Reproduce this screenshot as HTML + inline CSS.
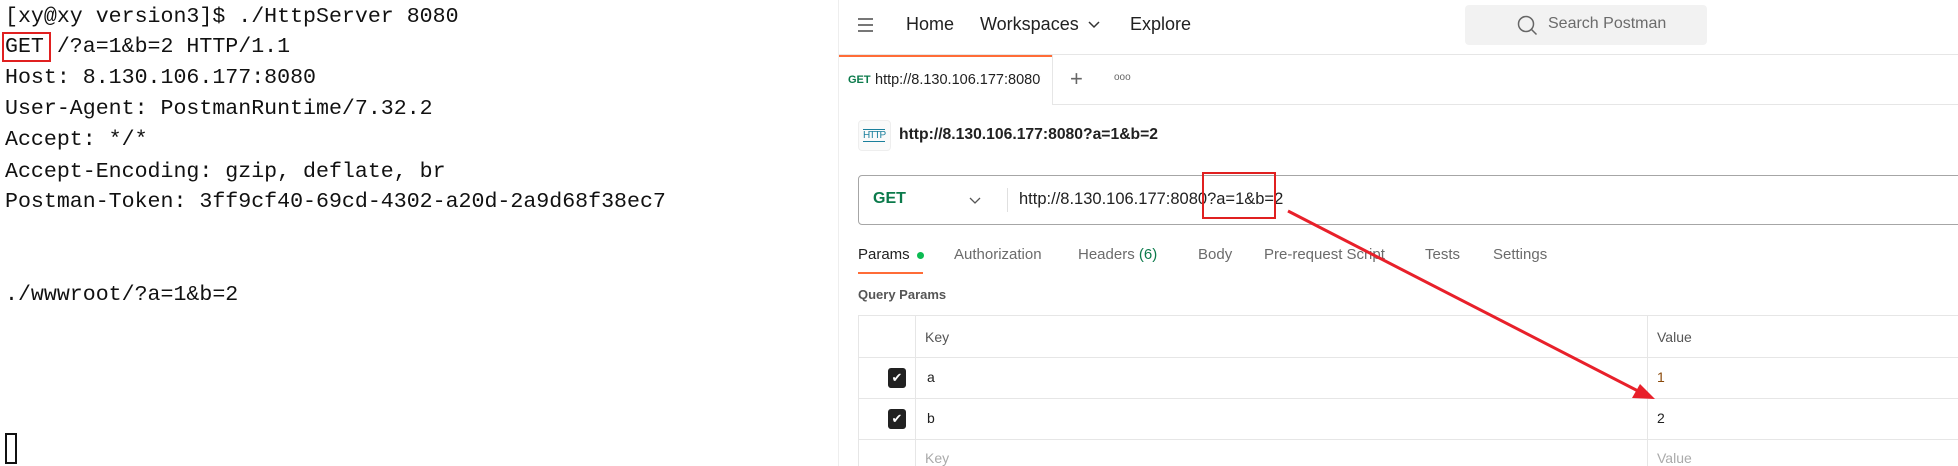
<!DOCTYPE html>
<html><head><meta charset="utf-8"><style>
*{margin:0;padding:0;box-sizing:border-box}
body{width:1958px;height:466px;overflow:hidden;background:#fff;position:relative;font-family:"Liberation Sans",sans-serif}
.a{position:absolute;white-space:nowrap}
.t{position:absolute;left:5px;font-family:"Liberation Mono",monospace;font-size:21.6px;color:#111;line-height:31px;white-space:pre}
.n{font-size:18px;color:#212121}
.tab{font-size:15px;color:#6b6b6b}
</style></head><body>
<div class="t" style="top:2px">[xy@xy version3]$ ./HttpServer 8080</div>
<div class="t" style="top:32px">GET /?a=1&amp;b=2 HTTP/1.1</div>
<div class="t" style="top:63px">Host: 8.130.106.177:8080</div>
<div class="t" style="top:94px">User-Agent: PostmanRuntime/7.32.2</div>
<div class="t" style="top:125px">Accept: */*</div>
<div class="t" style="top:157px">Accept-Encoding: gzip, deflate, br</div>
<div class="t" style="top:187px">Postman-Token: 3ff9cf40-69cd-4302-a20d-2a9d68f38ec7</div>
<div class="t" style="top:280px">./wwwroot/?a=1&amp;b=2</div>
<div class="a" style="left:2px;top:32px;width:49px;height:30px;border:2px solid #e02020"></div>
<div class="a" style="left:5px;top:433px;width:12px;height:31px;border:2px solid #111"></div>

<div class="a" style="left:838px;top:0;width:1px;height:466px;background:#eee"></div>
<div class="a" style="left:858px;top:18px;width:15px;height:2px;background:#777;box-shadow:0 6px 0 #777,0 12px 0 #777"></div>
<div class="a n" style="left:906px;top:14px">Home</div>
<div class="a n" style="left:980px;top:14px">Workspaces</div>
<svg class="a" style="left:1088px;top:20px" width="12" height="10"><path d="M1 2l5 5 5-5" stroke="#333" stroke-width="1.5" fill="none"/></svg>
<div class="a n" style="left:1130px;top:14px">Explore</div>
<div class="a" style="left:1465px;top:5px;width:242px;height:40px;background:#f2f2f2;border-radius:4px"></div>
<svg class="a" style="left:1517px;top:15px" width="22" height="22"><circle cx="9" cy="9" r="7.5" stroke="#666" stroke-width="1.5" fill="none"/><path d="M14.5 14.5l5 5" stroke="#666" stroke-width="1.5"/></svg>
<div class="a" style="left:1548px;top:15px;font-size:16px;color:#6b6b6b">Search Postman</div>
<div class="a" style="left:839px;top:54px;width:1119px;height:1px;background:#e6e6e6"></div>
<div class="a" style="left:839px;top:55px;width:213px;height:2px;background:#ff6c37"></div>
<div class="a" style="left:1052px;top:55px;width:1px;height:50px;background:#e6e6e6"></div>
<div class="a" style="left:1052px;top:104px;width:906px;height:1px;background:#e6e6e6"></div>
<div class="a" style="left:848px;top:74px;font-size:11px;font-weight:bold;color:#0b7a4b">GET</div>
<div class="a" style="left:875px;top:72px;font-size:14.5px;color:#212121;width:166px;overflow:hidden">http://8.130.106.177:8080?</div>
<div class="a" style="left:1070px;top:66px;font-size:22px;color:#666">+</div>
<div class="a" style="left:1114px;top:72px;font-size:10px;color:#666">ooo</div>
<div class="a" style="left:858px;top:120px;width:33px;height:31px;border:1px solid #eee;border-radius:4px;background:#fafafa"></div>
<div class="a" style="left:863px;top:129px;font-size:10px;color:#1a7f9c;letter-spacing:-1px;border-top:1px solid #1a7f9c;border-bottom:1px solid #1a7f9c;line-height:11px">HTTP</div>
<div class="a" style="left:899px;top:126px;font-size:15.7px;font-weight:bold;color:#212121">http://8.130.106.177:8080?a=1&amp;b=2</div>
<div class="a" style="left:858px;top:175px;width:1110px;height:50px;border:1px solid #a6a6a6;border-radius:4px"></div>
<div class="a" style="left:873px;top:190px;font-size:16px;font-weight:bold;color:#0b7a4b">GET</div>
<svg class="a" style="left:969px;top:196px" width="12" height="9"><path d="M1 2l5 5 5-5" stroke="#555" stroke-width="1.3" fill="none"/></svg>
<div class="a" style="left:1007px;top:188px;width:1px;height:24px;background:#e0e0e0"></div>
<div class="a" style="left:1019px;top:190px;font-size:16.5px;color:#212121">http://8.130.106.177:8080?a=1&amp;b=2</div>
<div class="a" style="left:1202px;top:172px;width:74px;height:47px;border:2px solid #e02020"></div>
<div class="a tab" style="left:858px;top:246px;color:#212121">Params</div>
<div class="a" style="left:917px;top:252px;width:7px;height:7px;border-radius:50%;background:#0cbb52"></div>
<div class="a" style="left:858px;top:272px;width:65px;height:2px;background:#ff6c37"></div>
<div class="a tab" style="left:954px;top:246px">Authorization</div>
<div class="a tab" style="left:1078px;top:246px">Headers <span style="color:#0b7a4b">(6)</span></div>
<div class="a tab" style="left:1198px;top:246px">Body</div>
<div class="a tab" style="left:1264px;top:246px">Pre-request Script</div>
<div class="a tab" style="left:1425px;top:246px">Tests</div>
<div class="a tab" style="left:1493px;top:246px">Settings</div>
<div class="a" style="left:858px;top:287px;font-size:13px;font-weight:bold;color:#555">Query Params</div>
<div class="a" style="left:858px;top:315px;width:1100px;height:151px;border-left:1px solid #e6e6e6;border-top:1px solid #e6e6e6"></div>
<div class="a" style="left:858px;top:357px;width:1100px;height:1px;background:#e6e6e6"></div>
<div class="a" style="left:858px;top:398px;width:1100px;height:1px;background:#e6e6e6"></div>
<div class="a" style="left:858px;top:439px;width:1100px;height:1px;background:#e6e6e6"></div>
<div class="a" style="left:915px;top:315px;width:1px;height:151px;background:#e6e6e6"></div>
<div class="a" style="left:1647px;top:315px;width:1px;height:151px;background:#e6e6e6"></div>
<div class="a" style="left:925px;top:329px;font-size:14px;color:#555">Key</div>
<div class="a" style="left:1657px;top:329px;font-size:14px;color:#555">Value</div>
<div class="a" style="left:888px;top:368px;width:18px;height:20px;background:#212121;border-radius:3px;color:#fff;font-size:13px;text-align:center;line-height:20px">✔</div>
<div class="a" style="left:888px;top:409px;width:18px;height:20px;background:#212121;border-radius:3px;color:#fff;font-size:13px;text-align:center;line-height:20px">✔</div>
<div class="a" style="left:927px;top:369px;font-size:14px;color:#212121">a</div>
<div class="a" style="left:927px;top:410px;font-size:14px;color:#212121">b</div>
<div class="a" style="left:1657px;top:369px;font-size:14px;color:#8a4a0a">1</div>
<div class="a" style="left:1657px;top:410px;font-size:14px;color:#212121">2</div>
<div class="a" style="left:925px;top:450px;font-size:14px;color:#aaa">Key</div>
<div class="a" style="left:1657px;top:450px;font-size:14px;color:#aaa">Value</div>
<svg class="a" style="left:0;top:0" width="1958" height="466"><path d="M1288 211L1640 392" stroke="#e8202a" stroke-width="3"/><path d="M1655 399L1632 398L1640 384Z" fill="#e8202a"/></svg>
</body></html>
